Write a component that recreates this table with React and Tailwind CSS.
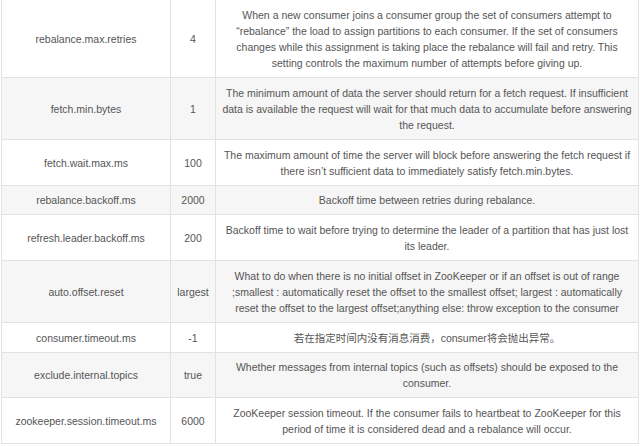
import React from "react";

const rows = [
  { name: "rebalance.max.retries", def: "4", h: "h-[78px]", bg: "bg-white", desc: "When a new consumer joins a consumer group the set of consumers attempt to “rebalance” the load to assign partitions to each consumer. If the set of consumers changes while this assignment is taking place the rebalance will fail and retry. This setting controls the maximum number of attempts before giving up." },
  { name: "fetch.min.bytes", def: "1", h: "h-[62px]", bg: "bg-[#f6f6f6]", desc: "The minimum amount of data the server should return for a fetch request. If insufficient data is available the request will wait for that much data to accumulate before answering the request." },
  { name: "fetch.wait.max.ms", def: "100", h: "h-[46px]", bg: "bg-white", desc: "The maximum amount of time the server will block before answering the fetch request if there isn’t sufficient data to immediately satisfy fetch.min.bytes." },
  { name: "rebalance.backoff.ms", def: "2000", h: "h-[29px]", bg: "bg-[#f6f6f6]", desc: "Backoff time between retries during rebalance." },
  { name: "refresh.leader.backoff.ms", def: "200", h: "h-[46px]", bg: "bg-white", desc: "Backoff time to wait before trying to determine the leader of a partition that has just lost its leader." },
  { name: "auto.offset.reset", def: "largest", h: "h-[62px]", bg: "bg-[#f6f6f6]", desc: "What to do when there is no initial offset in ZooKeeper or if an offset is out of range ;smallest : automatically reset the offset to the smallest offset; largest : automatically reset the offset to the largest offset;anything else: throw exception to the consumer" },
  { name: "consumer.timeout.ms", def: "-1", h: "h-[30px]", bg: "bg-white", desc: "若在指定时间内没有消息消费，consumer将会抛出异常。" },
  { name: "exclude.internal.topics", def: "true", h: "h-[45px]", bg: "bg-[#f6f6f6]", desc: "Whether messages from internal topics (such as offsets) should be exposed to the consumer." },
  { name: "zookeeper.session.timeout.ms", def: "6000", h: "h-[46px]", bg: "bg-white", desc: "ZooKeeper session timeout. If the consumer fails to heartbeat to ZooKeeper for this period of time it is considered dead and a rebalance will occur." },
];

export default function App() {
  return (
    <div
      className="w-[640px] h-[446px] overflow-hidden bg-white pl-[1px] text-[#555555] text-[10.5px] leading-[16px]"
      style={{ fontFamily: '"Liberation Sans", Arial, "Noto Sans CJK SC", sans-serif' }}
    >
      <div className="w-[638px] flex flex-col">
        {rows.map((r) => (
          <div key={r.name} className={`flex ${r.h} ${r.bg} border-b border-[#e2e2e2]`}>
            <div className="w-[169px] shrink-0 flex items-center justify-center border-l border-[#e2e2e2] text-center">
              {r.name}
            </div>
            <div className="w-[45px] shrink-0 flex items-center justify-center border-l border-[#e2e2e2] text-center">
              {r.def}
            </div>
            <div className="flex-1 flex items-center justify-center border-l border-r border-[#e2e2e2] px-[4px] text-center">
              {r.desc}
            </div>
          </div>
        ))}
      </div>
    </div>
  );
}
